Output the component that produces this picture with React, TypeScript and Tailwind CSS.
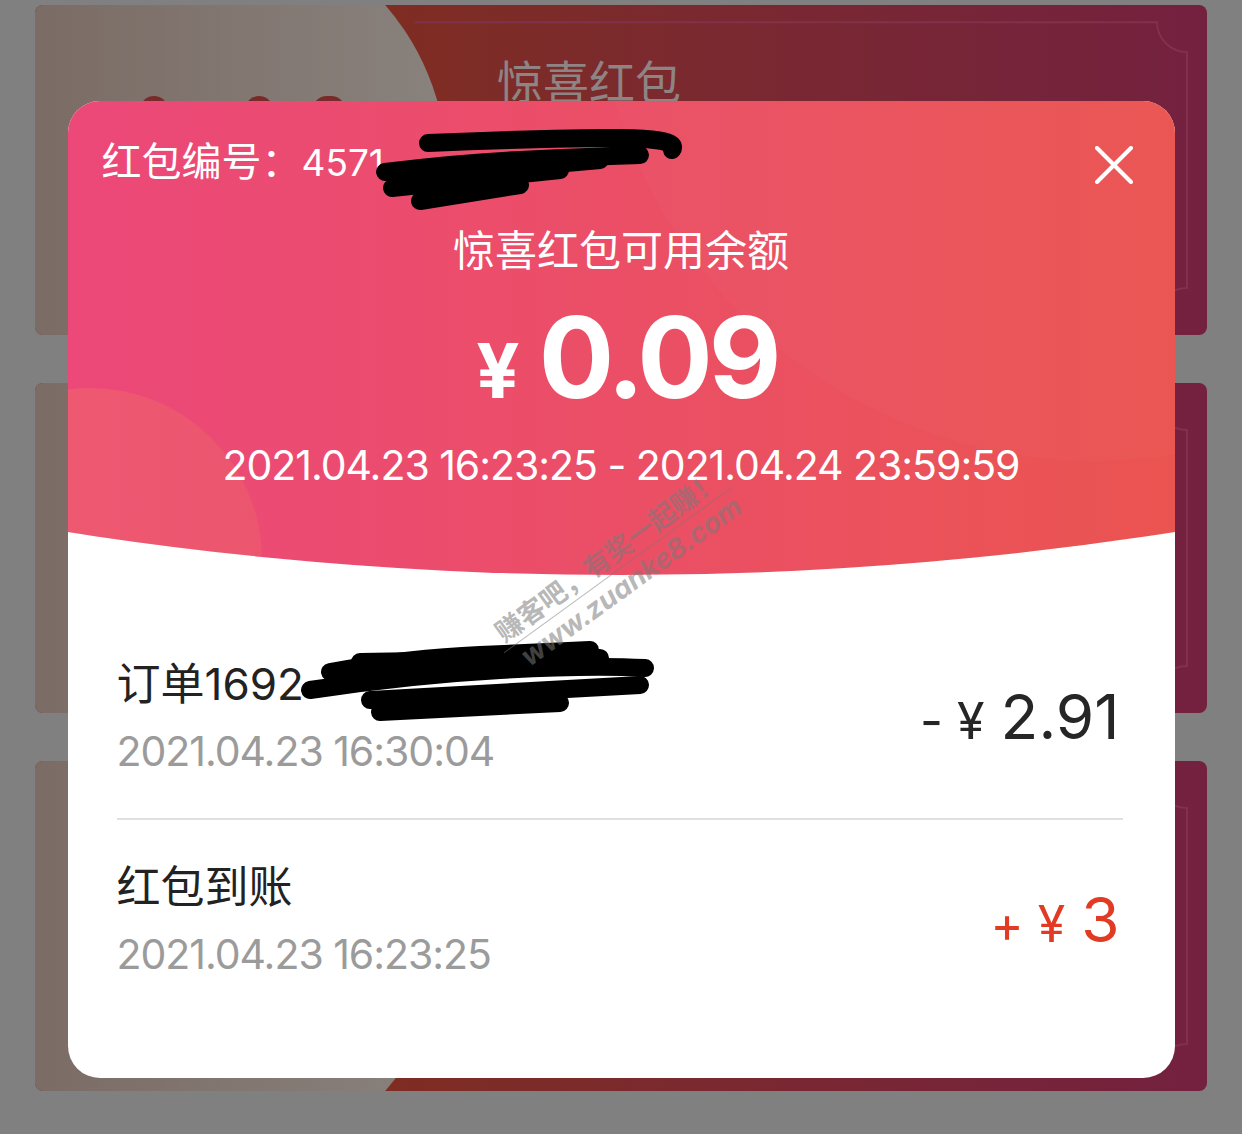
import clsx from "clsx";

function BgCard({ title }: { title?: string }) {
  return (
    <div className="relative h-[330px] overflow-hidden rounded-[8px] bg-gradient-to-r from-[#7f2d22] from-30% to-[#73213f]">
      <svg className="absolute inset-0 h-full w-full" viewBox="0 0 1173 330" fill="none">
        <path
          d="M380 17 H1123 A30 30 0 0 0 1153 47 V283 A30 30 0 0 0 1123 313 H380"
          stroke="#82314b"
          strokeWidth="2"
        />
      </svg>
      <div className="absolute left-[-90px] top-[-86px] h-[502px] w-[502px] rounded-full bg-gradient-to-r from-[#786760] to-[#89827d]" />
      {title && (
        <>
          <div className="absolute left-[105px] top-[91px] flex">
            <span className="h-[30px] w-[28px] rounded-full bg-[#7b2a2a]" />
            <span className="ml-[77px] h-[30px] w-[28px] rounded-full bg-[#7b2a2a]" />
            <span className="ml-[39px] h-[30px] w-[34px] rounded-full bg-[#7b2a2a]" />
          </div>
          <p className="relative pl-[462px] pt-[54px] text-[46px] leading-[46px] text-[#8e8484]">
            {title}
          </p>
        </>
      )}
    </div>
  );
}

function Row({
  title,
  time,
  sign,
  amount,
  red,
}: {
  title: string;
  time: string;
  sign: string;
  amount: string;
  red?: boolean;
}) {
  return (
    <div className="flex items-center justify-between">
      <div className="flex flex-col">
        <p className="text-[44px] leading-[44px] text-[#222222]">{title}</p>
        <p className="mt-[25px] text-[41px] leading-[41px] tracking-[-0.025em] text-[#9b9b9b]">
          {time}
        </p>
      </div>
      <div
        className={clsx(
          "mr-[6px] flex items-baseline",
          red ? "text-[#e23b24]" : "text-[#262626]"
        )}
      >
        <span className="text-[50px] leading-[50px]">{sign}</span>
        <span className="ml-[14px] text-[50px] leading-[50px]">¥</span>
        <span className="ml-[16px] text-[62px] leading-[62px]">{amount}</span>
      </div>
    </div>
  );
}

export default function App() {
  return (
    <div className="relative min-h-screen w-full overflow-hidden bg-[#808080] [font-family:Inter,'Noto_Sans_CJK_SC',sans-serif]">
      {/* page behind the overlay */}
      <div className="flex flex-col gap-12 px-[35px] pt-[5px]">
        <BgCard title="惊喜红包" />
        <BgCard />
        <BgCard />
      </div>

      {/* modal */}
      <div className="absolute inset-0 flex justify-center pt-[101px]">
        <div className="relative h-[977px] w-[1107px] overflow-hidden rounded-[32px] bg-white">
          <div className="relative h-[474px] overflow-hidden bg-gradient-to-r from-[#ec4879] to-[#ea5450] text-white [clip-path:circle(3584px_at_50%_-3110px)]">
            <div className="absolute left-[-150px] top-[287px] h-[344px] w-[344px] rounded-full bg-gradient-to-r from-[#f3805c]/35 to-[#f3805c]/20" />
            <div className="absolute right-[-420px] top-[-640px] h-[1000px] w-[1000px] rounded-full bg-white/[0.02]" />
            <div className="relative flex flex-col">
              <div className="pl-[34px] pt-[41px] text-[40px] leading-[40px]">
                红包编号：<span className="text-[37px]">4571</span>
              </div>
              <p className="mt-[47px] text-center text-[42px] leading-[42px]">惊喜红包可用余额</p>
              <div className="mt-[29px] flex h-[112px] items-baseline justify-center pl-[12px] font-bold">
                <span className="text-[76px] leading-[76px]">¥</span>
                <span className="ml-[19px] text-[112px] leading-[112px] tracking-[-0.035em]">0.09</span>
              </div>
              <p className="mt-[32px] text-center text-[41px] leading-[41px] tracking-[-0.025em]">
                2021.04.23 16:23:25 - 2021.04.24 23:59:59
              </p>
            </div>
            <svg
              className="absolute right-[42px] top-[45px] h-[38px] w-[38px]"
              viewBox="0 0 38 38"
              fill="none"
              stroke="white"
              strokeWidth="4"
              strokeLinecap="round"
            >
              <path d="M2 2 L36 36" />
              <path d="M36 2 L2 36" />
            </svg>
          </div>

          <div className="px-[49px] pt-[87px]">
            <Row title="订单1692" time="2021.04.23 16:30:04" sign="-" amount="2.91" />
            <div className="mr-[3px] mt-[46px] h-[2px] bg-[#e0e0e0]" />
            <div className="pt-[45px]">
              <Row title="红包到账" time="2021.04.23 16:23:25" sign="+" amount="3" red />
            </div>
          </div>

          {/* redaction scribbles */}
          <svg
            className="absolute left-[300px] top-[28px] h-[85px] w-[320px]"
            viewBox="0 0 320 85"
            fill="none"
            stroke="black"
            strokeWidth="18"
            strokeLinecap="round"
            strokeLinejoin="round"
          >
            <path d="M60 14 Q150 10 232 9 T304 21" />
            <path d="M17 43 Q90 34 152 31 T272 26" />
            <path d="M32 49 L232 31" />
            <path d="M24 59 L192 41" />
            <path d="M52 72 L152 56" />
          </svg>
          <svg
            className="absolute left-[232px] top-[539px] h-[90px] w-[360px]"
            viewBox="0 0 360 90"
            fill="none"
            stroke="black"
            strokeWidth="18"
            strokeLinecap="round"
            strokeLinejoin="round"
          >
            <path d="M30 32 Q110 18 180 15 T290 10" />
            <path d="M10 50 Q110 35 200 30 T345 28" />
            <path d="M60 22 L300 18" />
            <path d="M70 60 L340 45" />
            <path d="M80 72 L260 63" />
          </svg>

          {/* watermark */}
          <div className="pointer-events-none absolute left-[550px] top-[469px] flex -translate-x-1/2 -translate-y-1/2 rotate-[-36deg] flex-col items-center whitespace-nowrap text-[#7a7a7a]/55">
            <p className="border-b border-[#7a7a7a]/50 px-[6px] text-[27px] font-bold leading-[32px]">
              赚客吧，有奖一起赚！
            </p>
            <p className="ml-[8px] text-[28px] font-bold italic leading-[32px]">www.zuanke8.com</p>
          </div>
        </div>
      </div>
    </div>
  );
}
